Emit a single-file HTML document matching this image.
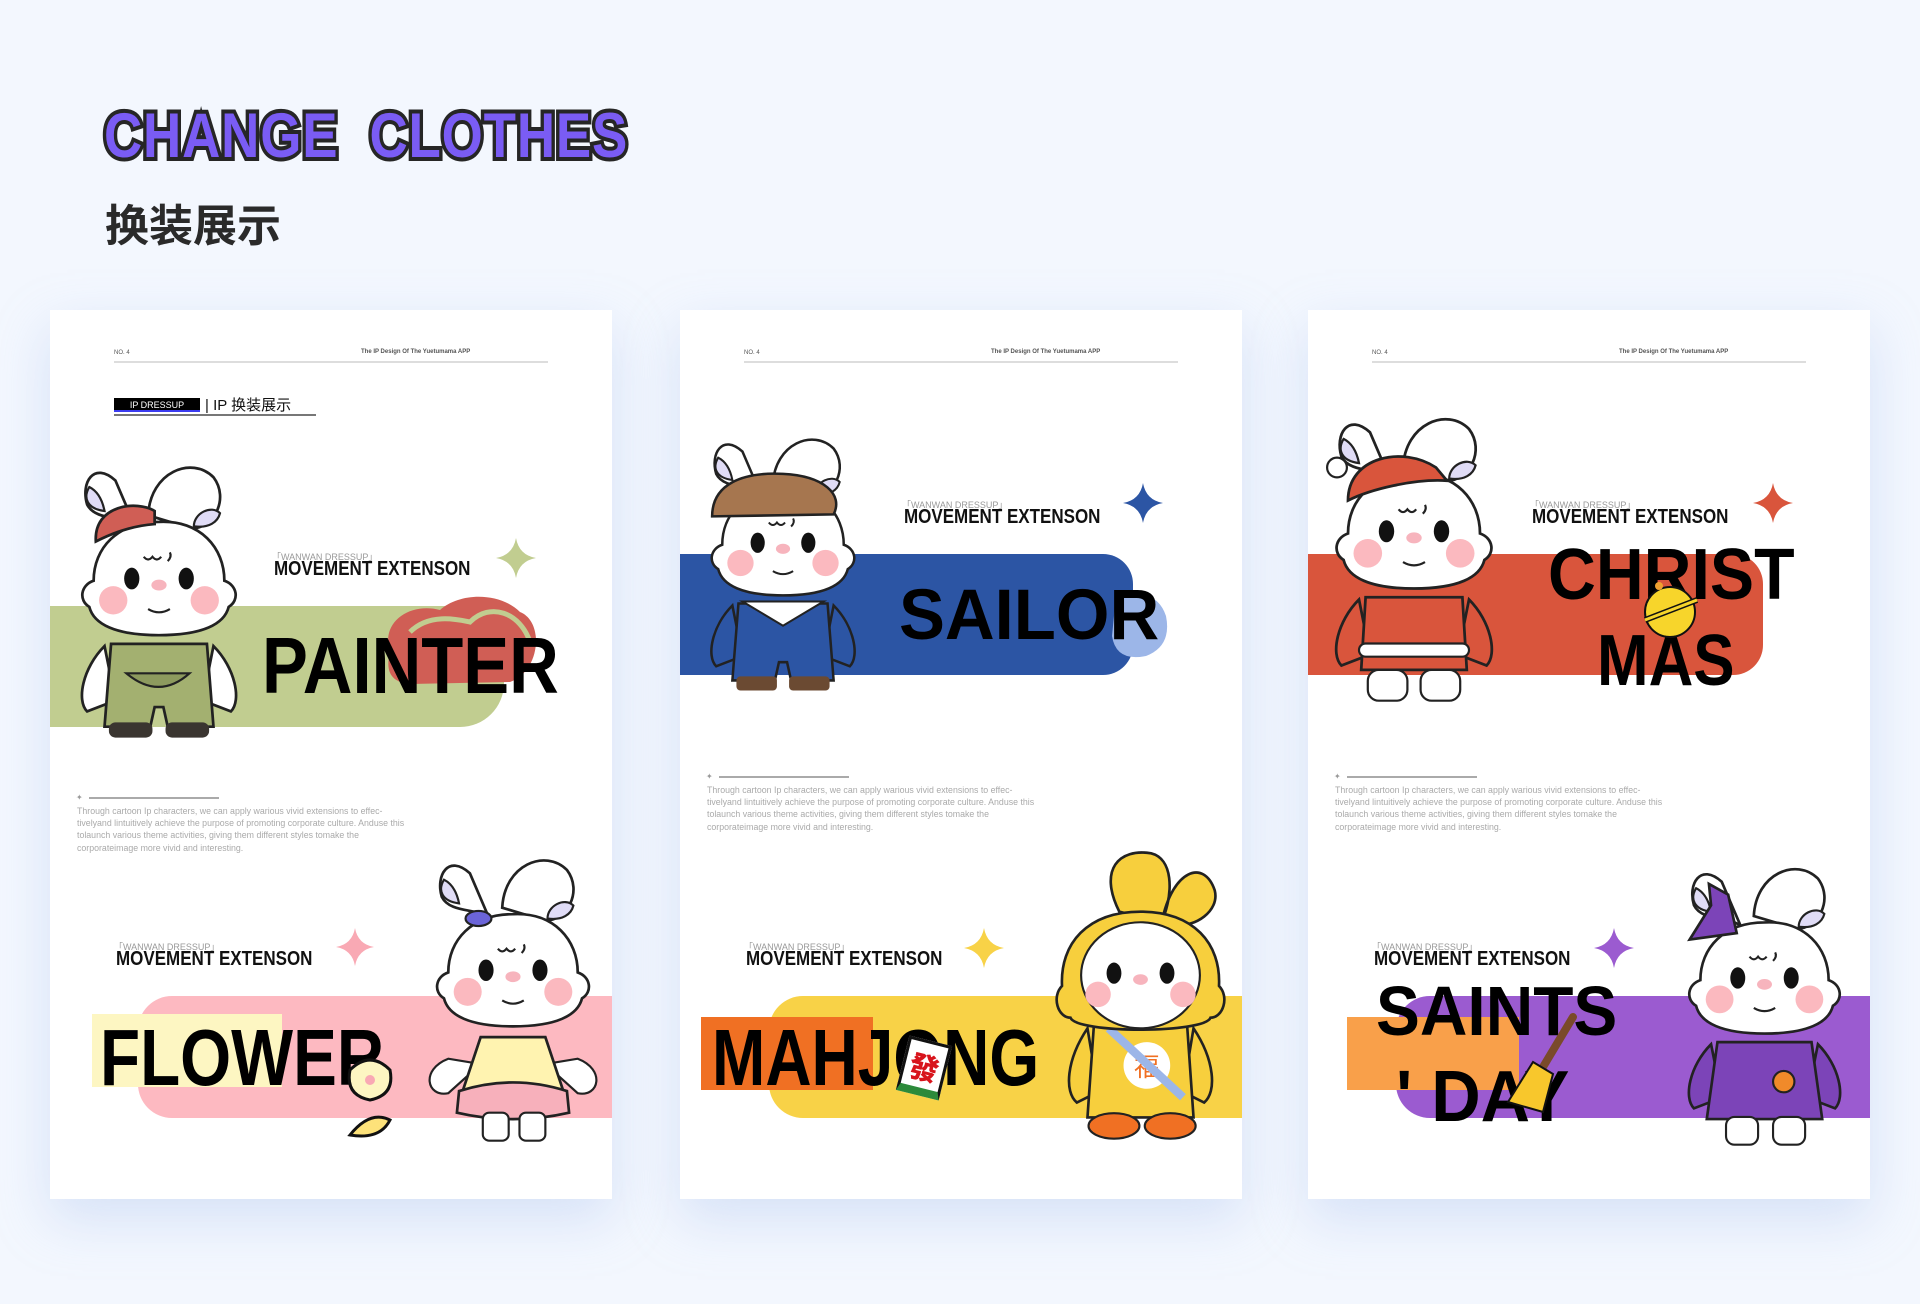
<!DOCTYPE html>
<html><head><meta charset="utf-8">
<style>
*{margin:0;padding:0;box-sizing:border-box}
body{width:1920px;height:1304px;background:#f3f7fe;position:relative;overflow:hidden;font-family:"Liberation Sans","Noto Sans CJK SC",sans-serif}
.title{position:absolute;left:104px;top:100px;font:900 63px "Liberation Sans",sans-serif;color:#7a5cf4;-webkit-text-stroke:8px #262626;paint-order:stroke fill;letter-spacing:1px;transform:scaleX(0.84);transform-origin:left top;white-space:nowrap}
.sub{position:absolute;left:105px;top:190px;font:700 44px "Liberation Sans","Noto Sans CJK SC",sans-serif;color:#2a2a2a}
.card{position:absolute;top:310px;width:562px;height:889px;background:#fff;overflow:hidden;box-shadow:0 20px 50px rgba(160,185,235,.35)}
.a{position:absolute}
.no{font-size:6px;color:#555;top:40px;left:64px}
.rt{font-size:6px;color:#555;top:39px;left:311px;font-weight:700}
.hl{top:51px;left:64px;width:434px;height:2px;background:#ddd}
.big{font-weight:900;color:#000;white-space:nowrap;transform-origin:left top;line-height:1;font-family:"Liberation Sans",sans-serif}
.mv{font:700 20px "Liberation Sans Narrow","Liberation Sans",sans-serif;color:#111;white-space:nowrap;transform:scaleX(.85);transform-origin:left top}
.ww{font:9px "Liberation Sans Narrow","Liberation Sans",sans-serif;color:#999;white-space:nowrap}
.desc{font-size:8.8px;line-height:12.2px;color:#aaa;width:335px}
.dl{height:2px;background:#aaa;width:146px}
</style></head><body>
<div class="title">CHANGE&nbsp;&nbsp;CLOTHES</div>
<div class="sub">换装展示</div>

<svg width="0" height="0" style="position:absolute">
<defs>
<g id="head">
<path d="M40 28 C20 10 8 30 14 50 C22 66 50 60 58 70 Z" fill="#fff" stroke="#222" stroke-width="2.5"/>
<path d="M16 34 C10 44 14 54 30 56 C28 46 24 38 16 34Z" fill="#e0dcf6" stroke="#222" stroke-width="2"/>
<path d="M70 60 C72 20 110 5 130 25 C145 45 130 72 110 72 Z" fill="#fff" stroke="#222" stroke-width="2.5"/>
<path d="M112 70 C112 58 128 50 136 58 C134 66 126 72 112 70Z" fill="#e0dcf6" stroke="#222" stroke-width="2"/>
<path d="M80 66 C118 64 140 90 140 120 C152 124 154 138 144 144 C140 160 120 170 80 170 C40 170 20 160 16 144 C6 138 8 124 20 120 C20 90 42 66 80 66Z" fill="#fff" stroke="#222" stroke-width="2.5"/>
<ellipse cx="55" cy="118" rx="7" ry="10" fill="#111"/>
<ellipse cx="105" cy="118" rx="7" ry="10" fill="#111"/>
<circle cx="38" cy="138" r="13" fill="#fbb9bf"/>
<circle cx="122" cy="138" r="13" fill="#fbb9bf"/>
<ellipse cx="80" cy="124" rx="7" ry="5" fill="#f7b4bd"/>
<path d="M70 146 Q80 152 90 146" fill="none" stroke="#222" stroke-width="2"/>
<path d="M66 98 q4 5 8 0 q4 5 8 0 M90 94 q2 4 -2 8" fill="none" stroke="#222" stroke-width="2"/>
</g>
</defs>
</svg>

<!-- CARD 1 -->
<div class="card" style="left:50px">
<div class="a no">NO. 4</div><div class="a rt">The IP Design Of The Yuetumama APP</div><div class="a hl"></div>
<div class="a" style="left:64px;top:88px;width:86px;height:14px;background:#000;color:#fff;font-size:9px;line-height:14px;text-align:center;border-bottom:2px solid #3b3bf0">IP DRESSUP</div>
<div class="a" style="left:155px;top:84px;font-size:15px;color:#111">| IP 换装展示</div>
<div class="a" style="left:64px;top:104px;width:202px;height:2px;background:#777"></div>
<div class="a" style="left:0;top:296px;width:454px;height:121px;background:#c1cd90;border-radius:0 44px 44px 0"></div>
<svg class="a" style="left:330px;top:282px" width="160" height="96" viewBox="0 0 160 96"><path d="M10 60 C0 30 30 10 60 18 C80 0 120 0 140 20 C165 30 160 80 130 90 L30 92 C8 90 6 76 10 60Z" fill="#d05e55"/><path d="M30 40 C50 20 80 28 90 30 C110 10 140 20 150 50" fill="none" stroke="#c1cd90" stroke-width="5"/></svg>
<svg class="a" style="left:446px;top:228px" width="40" height="40" viewBox="0 0 40 40"><path d="M20 0 Q23 17 40 20 Q23 23 20 40 Q17 23 0 20 Q17 17 20 0Z" fill="#c1cd90"/></svg>
<div class="a ww" style="left:222px;top:240px">「WANWAN DRESSUP」</div>
<div class="a mv" style="left:224px;top:248px">MOVEMENT EXTENSON</div>
<div class="a big" style="left:212px;top:316px;font-size:80px;transform:scaleX(.86)">PAINTER</div>
<svg class="a" style="left:14px;top:140px" width="190" height="305" viewBox="0 0 160 280">
<path d="M30 180 C10 200 4 230 14 240 L40 230 Z M130 180 C150 200 156 230 146 240 L120 230Z" fill="#fff" stroke="#222" stroke-width="2.5"/>
<path d="M36 178 L124 178 L130 254 L88 254 L84 236 L76 236 L72 254 L30 254Z" fill="#a3b070" stroke="#222" stroke-width="2.5"/>
<path d="M50 205 Q80 230 108 205 Z" fill="#8d9a5e" stroke="#222" stroke-width="2"/>
<rect x="34" y="250" width="40" height="14" rx="6" fill="#3a3530"/><rect x="86" y="250" width="40" height="14" rx="6" fill="#3a3530"/>
<use href="#head"/>
<path d="M22 84 C20 50 60 46 76 56 L76 68 C50 70 30 80 22 84Z" fill="#d05e55" stroke="#222" stroke-width="2.5"/>
</svg>
<div class="a dl" style="left:39px;top:487px;width:130px"></div><div class="a" style="left:26px;top:483px;font-size:8px;color:#999">✦</div>
<div class="a desc" style="left:27px;top:495px">Through cartoon Ip characters, we can apply warious vivid extensions to effec- tivelyand lintuitively achieve the purpose of promoting corporate culture. Anduse this tolaunch various theme activities, giving them different styles tomake the corporateimage more vivid and interesting.</div>
<div class="a" style="left:88px;top:686px;width:474px;height:122px;background:#fdb9c1;border-radius:34px 0 0 34px"></div>
<div class="a" style="left:42px;top:704px;width:190px;height:73px;background:#fdf6c2"></div>
<svg class="a" style="left:286px;top:618px" width="38" height="38" viewBox="0 0 40 40"><path d="M20 0 Q23 17 40 20 Q23 23 20 40 Q17 23 0 20 Q17 17 20 0Z" fill="#f9a9b4"/></svg>
<div class="a ww" style="left:64px;top:630px">「WANWAN DRESSUP」</div>
<div class="a mv" style="left:66px;top:638px">MOVEMENT EXTENSON</div>
<div class="a big" style="left:50px;top:708px;font-size:80px;transform:scaleX(.82)">FLOWER</div>
<svg class="a" style="left:290px;top:740px" width="70" height="90" viewBox="0 0 70 90"><path d="M10 20 Q30 0 50 20 Q55 45 30 50 Q5 45 10 20Z" fill="#fdf6c2" stroke="#111" stroke-width="3"/><path d="M10 85 Q30 60 50 70 Q40 90 10 85Z" fill="#fde27a" stroke="#111" stroke-width="3"/><circle cx="30" cy="30" r="5" fill="#f9a9b4"/></svg>
<svg class="a" style="left:364px;top:533px" width="198" height="302" viewBox="0 0 160 280">
<path d="M20 200 C-6 210 0 236 20 232 L50 205Z M140 200 C166 210 160 236 140 232 L110 205Z" fill="#fff" stroke="#222" stroke-width="2"/>
<path d="M50 180 L110 180 L130 240 Q80 256 30 240Z" fill="#fff3b0" stroke="#222" stroke-width="2.5"/>
<path d="M30 230 Q80 214 130 230 L132 250 Q80 262 28 250Z" fill="#f7b0bb" stroke="#222" stroke-width="2.5"/>
<rect x="52" y="250" width="24" height="26" rx="6" fill="#fff" stroke="#222" stroke-width="2"/><rect x="86" y="250" width="24" height="26" rx="6" fill="#fff" stroke="#222" stroke-width="2"/>
<use href="#head"/>
<ellipse cx="48" cy="70" rx="12" ry="7" fill="#6b64d8" stroke="#222" stroke-width="2"/>
</svg>
</div>

<!-- CARD 2 -->
<div class="card" style="left:680px">
<div class="a no">NO. 4</div><div class="a rt">The IP Design Of The Yuetumama APP</div><div class="a hl"></div>
<div class="a" style="left:0;top:244px;width:453px;height:121px;background:#2c55a4;border-radius:0 30px 30px 0"></div>
<svg class="a" style="left:426px;top:276px" width="66" height="80" viewBox="0 0 66 80"><path d="M10 10 Q50 0 60 30 Q66 60 40 70 Q10 76 6 50Z" fill="#9cb6e8"/></svg>
<svg class="a" style="left:443px;top:173px" width="40" height="40" viewBox="0 0 40 40"><path d="M20 0 Q23 17 40 20 Q23 23 20 40 Q17 23 0 20 Q17 17 20 0Z" fill="#2c55a4"/></svg>
<div class="a ww" style="left:222px;top:188px">「WANWAN DRESSUP」</div>
<div class="a mv" style="left:224px;top:196px">MOVEMENT EXTENSON</div>
<div class="a big" style="left:219px;top:270px;font-size:71px;transform:scaleX(.97)">SAILOR</div>
<svg class="a" style="left:22px;top:100px" width="162" height="310" viewBox="0 0 160 280">
<path d="M30 180 C10 200 4 230 14 240 L40 230 Z M130 180 C150 200 156 230 146 240 L120 230Z" fill="#2c55a4" stroke="#222" stroke-width="2.5"/>
<path d="M36 178 L124 178 L130 254 L88 254 L84 236 L76 236 L72 254 L30 254Z" fill="#2c55a4" stroke="#222" stroke-width="2.5"/>
<path d="M40 176 L80 200 L120 176 Z" fill="#fff" stroke="#222" stroke-width="2"/>
<rect x="34" y="250" width="40" height="14" rx="4" fill="#6b4a32"/><rect x="86" y="250" width="40" height="14" rx="4" fill="#6b4a32"/>
<use href="#head"/>
<path d="M10 92 C10 60 40 48 80 50 C120 52 140 70 130 90 Z" fill="#a6764f" stroke="#222" stroke-width="2.5"/>
</svg>
<div class="a dl" style="left:39px;top:466px;width:130px"></div><div class="a" style="left:26px;top:462px;font-size:8px;color:#999">✦</div>
<div class="a desc" style="left:27px;top:474px">Through cartoon Ip characters, we can apply warious vivid extensions to effec- tivelyand lintuitively achieve the purpose of promoting corporate culture. Anduse this tolaunch various theme activities, giving them different styles tomake the corporateimage more vivid and interesting.</div>
<div class="a" style="left:89px;top:686px;width:473px;height:122px;background:#f8d247;border-radius:34px 0 0 34px"></div>
<div class="a" style="left:21px;top:707px;width:172px;height:73px;background:#f07023"></div>
<svg class="a" style="left:284px;top:618px" width="40" height="40" viewBox="0 0 40 40"><path d="M20 0 Q23 17 40 20 Q23 23 20 40 Q17 23 0 20 Q17 17 20 0Z" fill="#f8d247"/></svg>
<div class="a ww" style="left:64px;top:630px">「WANWAN DRESSUP」</div>
<div class="a mv" style="left:66px;top:638px">MOVEMENT EXTENSON</div>
<div class="a big" style="left:32px;top:708px;font-size:80px;transform:scaleX(.8)">MAHJONG</div>
<div class="a" style="left:222px;top:730px;width:44px;height:56px;background:#fff;border:3px solid #111;border-bottom:8px solid #2c8a3a;transform:rotate(14deg);color:#d8141c;font:900 30px 'Noto Sans CJK SC',sans-serif;text-align:center;line-height:46px">發</div>
<svg class="a" style="left:375px;top:538px" width="171" height="297" viewBox="0 0 160 280">
<path d="M60 60 C40 20 60 0 90 5 C110 10 112 40 100 70Z M100 70 C110 20 140 10 150 40 C155 60 130 75 115 72Z" fill="#f7cf3d" stroke="#222" stroke-width="2.5"/>
<path d="M30 170 C10 200 8 230 20 240 L40 230 Z M130 170 C150 200 152 230 140 240 L120 230Z" fill="#f7cf3d" stroke="#222" stroke-width="2.5"/>
<path d="M36 168 L124 168 L130 254 L30 254Z" fill="#f7cf3d" stroke="#222" stroke-width="2.5"/>
<circle cx="86" cy="205" r="22" fill="#fff"/><text x="86" y="215" font-size="24" fill="#f07023" text-anchor="middle" font-family="Noto Sans CJK SC,sans-serif">福</text>
<path d="M50 170 L120 235" stroke="#9cb6e8" stroke-width="8"/>
<ellipse cx="55" cy="262" rx="24" ry="12" fill="#f07023" stroke="#222" stroke-width="2"/><ellipse cx="108" cy="262" rx="24" ry="12" fill="#f07023" stroke="#222" stroke-width="2"/>
<path d="M80 60 C130 60 156 90 154 130 C164 140 158 160 146 160 C140 175 20 175 14 160 C2 160 -4 140 6 130 C4 90 30 60 80 60Z" fill="#f7cf3d" stroke="#222" stroke-width="2.5"/>
<ellipse cx="80" cy="120" rx="56" ry="50" fill="#fff" stroke="#222" stroke-width="2"/>
<ellipse cx="55" cy="118" rx="7" ry="10" fill="#111"/><ellipse cx="105" cy="118" rx="7" ry="10" fill="#111"/>
<circle cx="40" cy="138" r="12" fill="#fbb9bf"/><circle cx="120" cy="138" r="12" fill="#fbb9bf"/>
<ellipse cx="80" cy="124" rx="7" ry="5" fill="#f7b4bd"/>
</svg>
</div>

<!-- CARD 3 -->
<div class="card" style="left:1308px">
<div class="a no">NO. 4</div><div class="a rt">The IP Design Of The Yuetumama APP</div><div class="a hl"></div>
<div class="a" style="left:0;top:244px;width:455px;height:121px;background:#d9553c;border-radius:0 30px 30px 0"></div>
<svg class="a" style="left:445px;top:173px" width="40" height="40" viewBox="0 0 40 40"><path d="M20 0 Q23 17 40 20 Q23 23 20 40 Q17 23 0 20 Q17 17 20 0Z" fill="#d9553c"/></svg>
<div class="a ww" style="left:222px;top:188px">「WANWAN DRESSUP」</div>
<div class="a mv" style="left:224px;top:196px">MOVEMENT EXTENSON</div>
<div class="a big" style="left:240px;top:229px;font-size:72px;transform:scaleX(.92)">CHRIST</div>
<div class="a big" style="left:289px;top:315px;font-size:72px;transform:scaleX(.86)">MAS</div>
<svg class="a" style="left:331px;top:270px" width="62" height="62" viewBox="0 0 62 62"><circle cx="31" cy="32" r="25" fill="#f7d52b" stroke="#111" stroke-width="2"/><path d="M6 40 L58 20" stroke="#111" stroke-width="6"/><path d="M6 40 L58 20" stroke="#f7d52b" stroke-width="3"/><circle cx="20" cy="6" r="4" fill="#f0a030"/></svg>
<svg class="a" style="left:18px;top:88px" width="176" height="315" viewBox="0 0 160 280">
<path d="M30 180 C10 200 4 230 14 240 L40 230 Z M130 180 C150 200 156 230 146 240 L120 230Z" fill="#d9553c" stroke="#222" stroke-width="2.5"/>
<path d="M36 178 L124 178 L128 244 L32 244Z" fill="#d9553c" stroke="#222" stroke-width="2.5"/>
<rect x="30" y="220" width="100" height="12" rx="6" fill="#fff" stroke="#222" stroke-width="2"/>
<rect x="38" y="244" width="36" height="28" rx="10" fill="#fff" stroke="#222" stroke-width="2"/><rect x="86" y="244" width="36" height="28" rx="10" fill="#fff" stroke="#222" stroke-width="2"/>
<use href="#head"/>
<path d="M20 90 C20 50 70 40 100 60 L110 72 C80 70 40 80 20 90Z" fill="#d9553c" stroke="#222" stroke-width="2.5"/>
<circle cx="10" cy="60" r="9" fill="#fff" stroke="#222" stroke-width="2"/>
</svg>
<div class="a dl" style="left:39px;top:466px;width:130px"></div><div class="a" style="left:26px;top:462px;font-size:8px;color:#999">✦</div>
<div class="a desc" style="left:27px;top:474px">Through cartoon Ip characters, we can apply warious vivid extensions to effec- tivelyand lintuitively achieve the purpose of promoting corporate culture. Anduse this tolaunch various theme activities, giving them different styles tomake the corporateimage more vivid and interesting.</div>
<div class="a" style="left:88px;top:686px;width:474px;height:122px;background:#9b5bd0;border-radius:34px 0 0 34px"></div>
<div class="a" style="left:39px;top:707px;width:172px;height:73px;background:#f9a04a"></div>
<svg class="a" style="left:286px;top:618px" width="40" height="40" viewBox="0 0 40 40"><path d="M20 0 Q23 17 40 20 Q23 23 20 40 Q17 23 0 20 Q17 17 20 0Z" fill="#9b5bd0"/></svg>
<div class="a ww" style="left:64px;top:630px">「WANWAN DRESSUP」</div>
<div class="a mv" style="left:66px;top:638px">MOVEMENT EXTENSON</div>
<div class="a big" style="left:68px;top:666px;font-size:70px;transform:scaleX(.94)">SAINTS</div>
<div class="a big" style="left:88px;top:751px;font-size:72px;transform:scaleX(.95)">' DAY</div>
<svg class="a" style="left:195px;top:702px" width="80" height="110" viewBox="0 0 80 110"><path d="M70 5 L40 55" stroke="#7a4a2a" stroke-width="8" stroke-linecap="round"/><path d="M30 50 L50 62 L40 100 L5 90Z" fill="#f8c72c" stroke="#111" stroke-width="2"/></svg>
<svg class="a" style="left:371px;top:538px" width="171" height="307" viewBox="0 0 160 280">
<path d="M30 180 C10 200 4 230 14 240 L40 230 Z M130 180 C150 200 156 230 146 240 L120 230Z" fill="#7c44b8" stroke="#222" stroke-width="2.5"/>
<path d="M36 178 L124 178 L134 250 L26 250Z" fill="#7c44b8" stroke="#222" stroke-width="2.5"/>
<circle cx="98" cy="215" r="10" fill="#f08a2a" stroke="#222" stroke-width="2"/>
<rect x="44" y="248" width="30" height="26" rx="8" fill="#fff" stroke="#222" stroke-width="2"/><rect x="88" y="248" width="30" height="26" rx="8" fill="#fff" stroke="#222" stroke-width="2"/>
<use href="#head"/>
<path d="M10 82 L30 50 L28 30 L46 40 L54 76 Z" fill="#7c44b8" stroke="#222" stroke-width="2.5"/>
</svg>
</div>
</body></html>
